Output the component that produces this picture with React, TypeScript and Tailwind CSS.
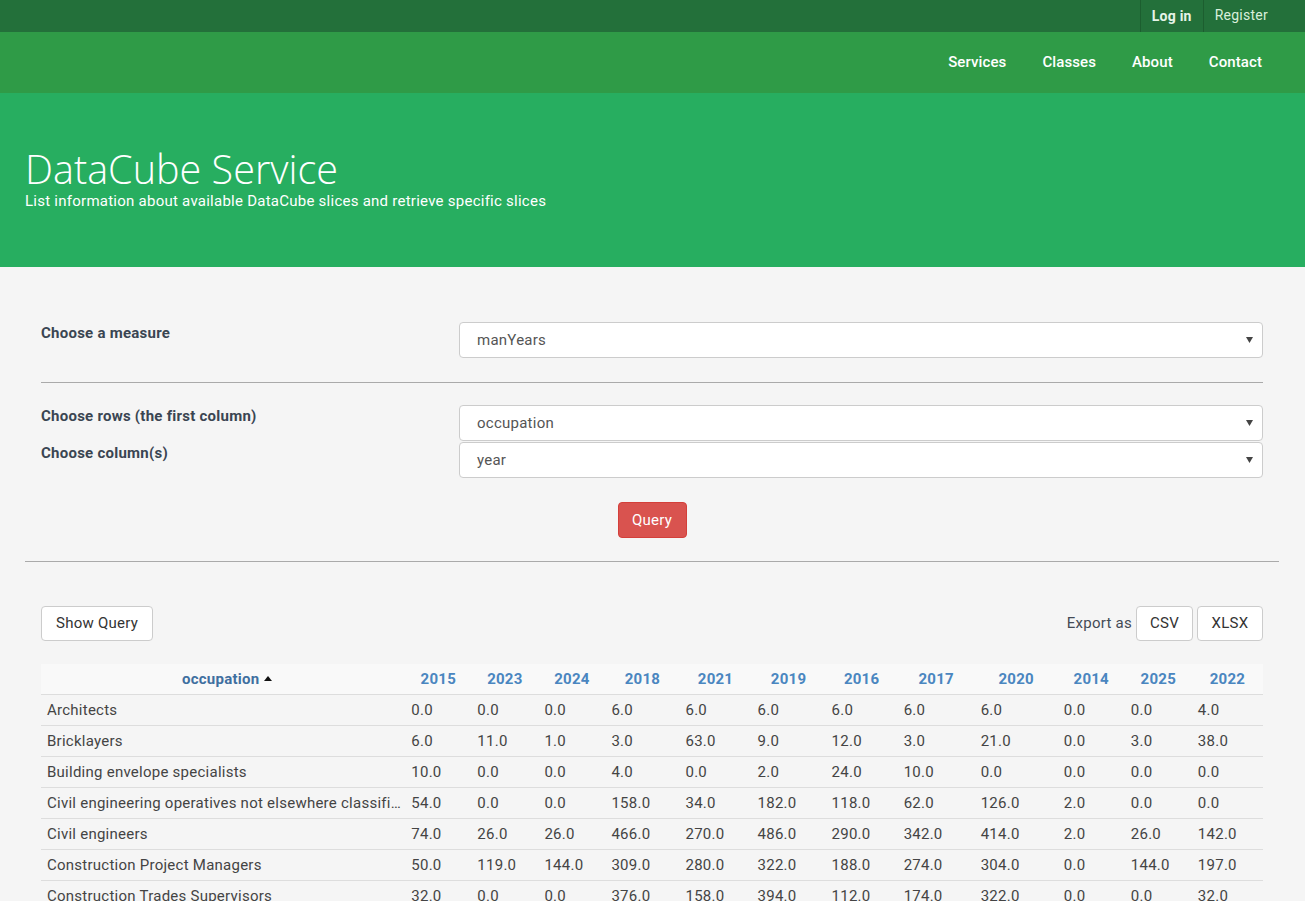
import React from "react";

const years = ["2015", "2023", "2024", "2018", "2021", "2019", "2016", "2017", "2020", "2014", "2025", "2022"];
const colW = [66, 67, 67, 74, 72, 74, 72, 77, 83, 67, 67, 71];

const rows: [string, string[]][] = [
  ["Architects", ["0.0", "0.0", "0.0", "6.0", "6.0", "6.0", "6.0", "6.0", "6.0", "0.0", "0.0", "4.0"]],
  ["Bricklayers", ["6.0", "11.0", "1.0", "3.0", "63.0", "9.0", "12.0", "3.0", "21.0", "0.0", "3.0", "38.0"]],
  ["Building envelope specialists", ["10.0", "0.0", "0.0", "4.0", "0.0", "2.0", "24.0", "10.0", "0.0", "0.0", "0.0", "0.0"]],
  ["Civil engineering operatives not elsewhere classified", ["54.0", "0.0", "0.0", "158.0", "34.0", "182.0", "118.0", "62.0", "126.0", "2.0", "0.0", "0.0"]],
  ["Civil engineers", ["74.0", "26.0", "26.0", "466.0", "270.0", "486.0", "290.0", "342.0", "414.0", "2.0", "26.0", "142.0"]],
  ["Construction Project Managers", ["50.0", "119.0", "144.0", "309.0", "280.0", "322.0", "188.0", "274.0", "304.0", "0.0", "144.0", "197.0"]],
  ["Construction Trades Supervisors", ["32.0", "0.0", "0.0", "376.0", "158.0", "394.0", "112.0", "174.0", "322.0", "0.0", "0.0", "32.0"]],
  ["Electricians", ["12.0", "4.0", "4.0", "88.0", "60.0", "92.0", "40.0", "52.0", "70.0", "0.0", "4.0", "22.0"]],
];

function Select({ value, className = "" }: { value: string; className?: string }) {
  return (
    <div
      className={`relative flex h-[36px] w-full items-center rounded-[4px] border border-[#cccccc] bg-white pl-[17px] text-[15px] text-[#555555] ${className}`}
    >
      <span>{value}</span>
      <svg className="absolute right-[9px] top-1/2 -translate-y-1/2" width="7" height="6" viewBox="0 0 7 6">
        <path d="M0 0 H7 L3.5 6 Z" fill="#444" />
      </svg>
    </div>
  );
}

export default function App() {
  return (
    <div
      className="min-h-[901px] bg-[#f5f5f5] tracking-[0.25px]"
      style={{ fontFamily: "Roboto, 'Liberation Sans', sans-serif" }}
    >
      {/* top bar */}
      <div className="flex h-[32px] justify-end bg-[#23703a] pr-[26px]">
        <div className="flex h-full items-center border-l border-r border-[#1c5e2f] px-[11px] text-[14px] font-bold text-[#e6f4e8]">
          Log in
        </div>
        <div className="flex h-full items-start px-[11px] pt-[5px] text-[14px] text-[#d9efdc]">Register</div>
      </div>
      {/* nav */}
      <div className="flex h-[61px] items-center justify-end gap-[36px] bg-[#2f9b47] pr-[43px] text-[15px] font-medium tracking-[0.1px] text-white">
        <span>Services</span>
        <span>Classes</span>
        <span>About</span>
        <span>Contact</span>
      </div>
      {/* hero */}
      <div className="h-[174px] bg-[#27ae60] pl-[25px] pt-[54px] text-white">
        <h1
          className="text-[39.6px] font-light leading-[44px] tracking-normal"
          style={{ fontFamily: "'Open Sans', sans-serif" }}
        >
          DataCube Service
        </h1>
        <p className="text-[15px] leading-[20px]">List information about available DataCube slices and retrieve specific slices</p>
      </div>

      {/* main */}
      <div className="pl-[25px] pr-[26px] pt-[55px]">
        <div className="px-[16px]">
          <div className="flex">
            <div className="w-[418px] shrink-0 pt-[1px] text-[15px] font-bold leading-[20px] text-[#3a4552]">
              Choose a measure
            </div>
            <Select value="manYears" />
          </div>
          <div className="mb-[22px] mt-[24px] h-px bg-[#aaaaaa]" />
          <div className="flex">
            <div className="w-[418px] shrink-0 pt-[1px] text-[15px] font-bold leading-[20px] text-[#3a4552]">
              <div className="h-[37px]">Choose rows (the first column)</div>
              <div>Choose column(s)</div>
            </div>
            <div className="flex w-full flex-col">
              <Select value="occupation" />
              <Select value="year" className="mt-[1px]" />
            </div>
          </div>
          <div className="mt-[24px] flex justify-center">
            <button className="h-[36px] w-[69px] rounded-[4px] border border-[#d43f3a] bg-[#d9534f] text-[15px] text-white">
              Query
            </button>
          </div>
        </div>
        <div className="mt-[23px] h-px bg-[#aaaaaa]" />

        <div className="px-[16px] pt-[44px]">
          <div className="flex items-center justify-between">
            <button className="h-[35px] rounded-[4px] border border-[#cccccc] bg-white px-[14px] text-[15px] text-[#333333]">
              Show Query
            </button>
            <div className="flex items-center gap-[4px] text-[15px] text-[#444b55]">
              <span>Export as</span>
              <button className="h-[35px] w-[57px] rounded-[4px] border border-[#cccccc] bg-white text-[15px] text-[#333333]">
                CSV
              </button>
              <button className="h-[35px] w-[66px] rounded-[4px] border border-[#cccccc] bg-white text-[15px] text-[#333333]">
                XLSX
              </button>
            </div>
          </div>

          <table className="mt-[23px] w-full table-fixed border-collapse text-[15px]">
            <colgroup>
              <col className="w-[364px]" />
              {colW.map((w, i) => (
                <col key={i} style={{ width: w }} />
              ))}
            </colgroup>
            <thead>
              <tr className="h-[30px] border-b border-[#dddddd] bg-[#f9f9f9]">
                <th className="text-center text-[15px] font-bold text-[#3f6fa0]">
                  <span className="inline-flex items-center gap-[5px] pl-[8px]">
                    occupation
                    <svg width="8" height="5" viewBox="0 0 8 5">
                      <path d="M0 5 L4 0 L8 5 Z" fill="#111" />
                    </svg>
                  </span>
                </th>
                {years.map((y) => (
                  <th key={y} className="text-center font-bold text-[#4a86c0]">
                    {y}
                  </th>
                ))}
              </tr>
            </thead>
            <tbody>
              {rows.map(([name, vals]) => (
                <tr key={name} className="h-[31px] border-b border-[#dddddd] text-[#444444]">
                  <td className="truncate pl-[6px] pr-[4px] pt-[1px]">{name}</td>
                  {vals.map((v, i) => (
                    <td key={i} className="pl-[6px] pt-[1px]">
                      {v}
                    </td>
                  ))}
                </tr>
              ))}
            </tbody>
          </table>
        </div>
      </div>
    </div>
  );
}
